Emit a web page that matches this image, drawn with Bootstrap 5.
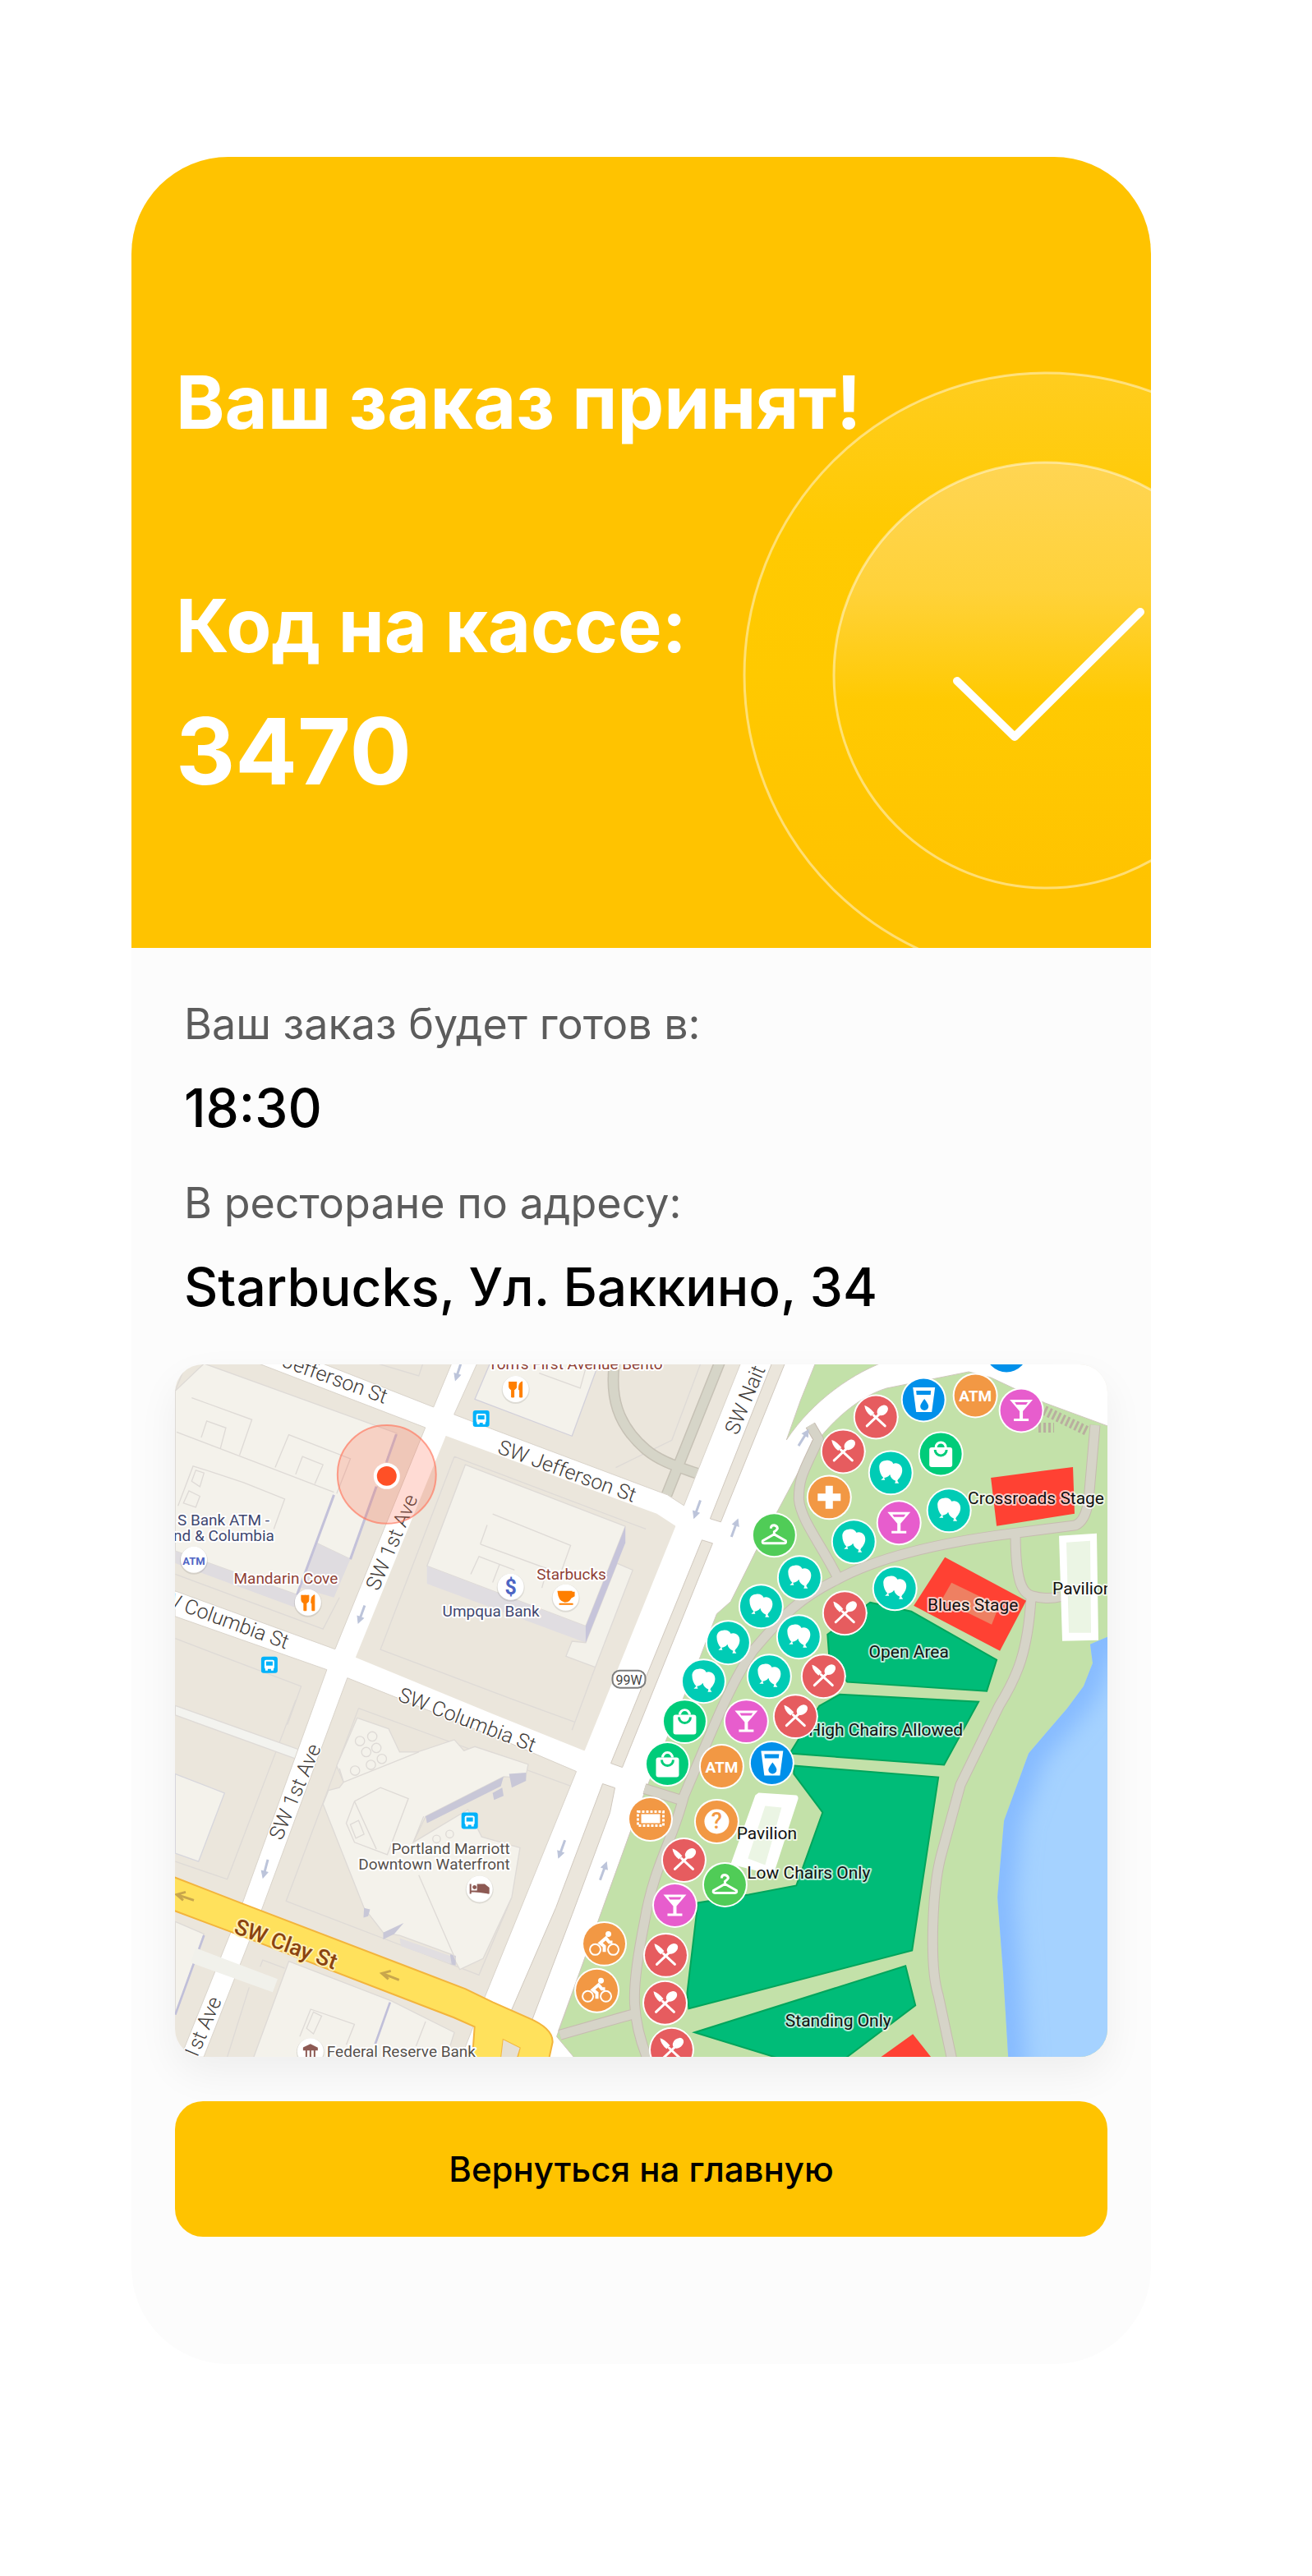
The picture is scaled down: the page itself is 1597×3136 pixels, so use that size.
<!DOCTYPE html>
<html lang="ru">
<head>
<meta charset="utf-8">
<meta name="viewport" content="width=device-width, initial-scale=1">
<title>Ваш заказ принят</title>
<link href="https://cdn.jsdelivr.net/npm/bootstrap@5.3.0/dist/css/bootstrap.min.css" rel="stylesheet">
<style>
  body { background: #fff; color: #000; font-family: Inter, "Open Sans", sans-serif; }
  .page-wrap { padding: 191px 196px 258px 160px; }
  .order-card { background: #fcfcfc; border-radius: 118px; }
  .order-hero { background: #ffc300; min-height: 963px; padding: 244px 54px 60px; }
  .hero-title { font-size: 90px; line-height: 110px; font-weight: 700; }
  .code-value { font-size: 112px; line-height: 130px; font-weight: 700; margin-top: 32px; }
  .code-block { margin-top: 162px; }
  .hero-art { position: absolute; right: 0; top: 0; width: 500px; height: 963px; }
  .order-body { padding: 63px 53px 155px; }
  .order-facts { padding-left: 11px; margin-bottom: 58px; }
  .order-facts dt { font-size: 52px; line-height: 60px; font-weight: 400; color: #5c5c5c; margin-bottom: 36px; }
  .order-facts dd { font-size: 64px; line-height: 72px; font-weight: 500; margin-bottom: 50px; }
  .order-facts dd:last-child { margin-bottom: 0; }
  .map-box { border-radius: 34px; box-shadow: 0 20px 50px rgba(0,0,0,.06); margin-bottom: 54px; }
  .map-box svg { display: block; width: 100%; height: auto; }
  .btn-home { --bs-btn-bg: #ffc300; --bs-btn-color: #000; --bs-btn-border-width: 0; --bs-btn-hover-bg: #f2b900; --bs-btn-border-radius: 34px;
    min-height: 165px; font-size: 42px; line-height: 50px; font-weight: 500; }
  .map-box text { font-family: Roboto, "Noto Sans", sans-serif; paint-order: stroke; stroke-linejoin: round; }
  .t-street { font-size: 25px; font-weight: 300; fill: #3f3b38; stroke: #fff; stroke-width: 3px; }
  .t-clay { font-size: 27px; font-weight: 500; fill: #8a4310; stroke: #fff0b5; stroke-width: 4px; }
  .t-poi { font-size: 19px; stroke: #fff; stroke-width: 4px; }
  .t-zone { font-size: 21px; fill: #111; stroke: #ffffffb0; stroke-width: 4px; }
  .t-atm { font-size: 19px; font-weight: 700; }
  .c-bank { fill: #3f4770; } .c-food { fill: #8f4136; } .c-place { fill: #55504c; }
</style>
</head>
<body>
<div class="page-wrap">
<main class="order-card overflow-hidden">
  <header class="order-hero position-relative text-white">
    <svg class="hero-art" viewBox="902 191 500 963" aria-hidden="true">
      <defs>
        <linearGradient id="gOuter" x1="0" y1="0" x2="0" y2="1"><stop offset="0" stop-color="#ffcd1f"/><stop offset=".25" stop-color="#ffca02"/><stop offset=".5" stop-color="#ffc900"/><stop offset=".85" stop-color="#ffc300"/></linearGradient>
        <linearGradient id="gInner" x1="0" y1="0" x2="0" y2="1"><stop offset="0" stop-color="#ffd553"/><stop offset=".3" stop-color="#ffd23a"/><stop offset=".56" stop-color="#ffca02"/><stop offset="1" stop-color="#ffc300"/></linearGradient>
      </defs>
      <g stroke="#fff" stroke-opacity=".45" stroke-width="3"><circle cx="1275" cy="822" r="368" fill="url(#gOuter)"/><circle cx="1275" cy="822" r="259" fill="url(#gInner)"/></g>
      <path d="M1166 829L1236 897L1389 745" fill="none" stroke="#fff" stroke-width="10" stroke-linecap="round" stroke-linejoin="round"/>
    </svg>
    <div class="position-relative">
      <h1 class="hero-title mb-0">Ваш заказ принят!</h1>
      <div class="code-block">
        <h2 class="hero-title mb-0">Код на кассе:</h2>
        <p class="code-value mb-0">3470</p>
      </div>
    </div>
  </header>

  <section class="order-body">
    <dl class="order-facts">
      <dt>Ваш заказ будет готов в:</dt>
      <dd>18:30</dd>
      <dt>В ресторане по адресу:</dt>
      <dd>Starbucks, Ул. Баккино, 34</dd>
    </dl>

    <div class="map-box overflow-hidden">
    <svg viewBox="213 1661 1136 844" role="img" aria-label="Карта: ресторан Starbucks">
      <defs>
        <filter id="soft" x="-40%" y="-20%" width="180%" height="140%"><feGaussianBlur stdDeviation="14"/></filter>
        <clipPath id="waterClip"><path id="shore" d="M1600 1900L1349 1993L1328 2002L1331 2025L1320 2053L1300 2080L1253 2135L1223 2217L1215 2310L1222 2403L1235 2620H1600Z"/></clipPath>
        <g id="fork" fill="#fff" stroke="#fff" stroke-linecap="round"><circle r="27"/><circle r="25.500" fill="#e65c5f" stroke="none"/><path d="M-11 11L7 -6M11 11L-3 -2" stroke-width="3" fill="none"/><ellipse cx="8" cy="-8" rx="7.500" ry="5.500" transform="rotate(-40 8 -8)" stroke="none"/><path d="M-14 -14Q-9 -13 -2 -5L-6 -1Q-13 -6 -14 -14Z" stroke="none"/></g>
        <g id="balloon" fill="#fff"><circle r="27.500"/><circle r="25.500" fill="#00ccb5"/><path d="M-6 -15C-2 -16 2 -14 3 -11C9 -13 14 -9 14 -3C14 2 11 6 9 8L8 10L10 13H5L6 10C2 8 0 6 -1 2C-3 5 -6 6 -8 6L-7 9H-12L-9 6C-12 3 -14 -2 -14 -7C-14 -12 -10 -15 -6 -15Z"/></g>
        <g id="cup"><circle r="27.500" fill="#fff"/><circle r="25.500" fill="#0090ea"/><path d="M-13 -15H14L10 15H-9Z" fill="#fff"/><path d="M-9 -11H9L8.500 -6H-8.500Z" fill="#0090ea"/><path d="M1 -1C4 3 6 6 6 8A5 5 0 0 1 -4 8C-4 6 -2 3 1 -1Z" fill="#0090ea"/></g>
        <g id="glass"><circle r="27.500" fill="#fff"/><circle r="25.500" fill="#e75dcd"/><path d="M-14 -13H14L2 1V10H9V13H-9V10H-2V1Z" fill="#fff"/><path d="M-8 -10H8L6 -7H-6Z" fill="#e75dcd"/></g>
        <g id="bag"><circle r="27.500" fill="#fff"/><circle r="25.500" fill="#00cc7a"/><rect x="-14" y="-8" width="28" height="24" rx="3" fill="#fff"/><path d="M-6 -8A6 6 0 0 1 6 -8" fill="none" stroke="#fff" stroke-width="3"/><path d="M-7 -5A7 7 0 0 0 7 -5" fill="none" stroke="#00cc7a" stroke-width="3"/></g>
        <g id="orange"><circle r="27.500" fill="#fff"/><circle r="25.500" fill="#f29844"/></g>
        <g id="hanger"><circle r="27.500" fill="#fff"/><circle r="25.500" fill="#50cc57"/><path d="M-4 -8Q-4 -12 0 -12Q4 -11 4 -8Q3 -6 0 -4V-1L14 7Q15 10 12 10H-12Q-15 10 -14 7L0 -1" fill="none" stroke="#fff" stroke-width="3"/></g>
        <g id="bike"><use href="#orange"/><g fill="none" stroke="#fff" stroke-width="2"><circle cx="-11" cy="7" r="6.500"/><circle cx="11" cy="7" r="6.500"/></g><circle cx="5" cy="-12" r="3.500" fill="#fff"/><path d="M0 10V3L-5 -1L2 -7L6 -2H10" fill="none" stroke="#fff" stroke-width="4"/></g>
        <g id="bus"><rect x="-10" y="-10" width="20" height="20" rx="3" fill="#00b2fa"/><rect x="-6" y="-6" width="12" height="11" rx="2" fill="#fff"/><path d="M-4 -4H4V1H-4Z" fill="#00b2fa"/><path d="M-5 4V7H-2V4M2 4V7H5V4" fill="#fff"/></g>
        <g id="poi"><circle cy="1" r="17" fill="#00000018"/><circle r="16" fill="#fff"/></g>
        <g id="food"><use href="#poi"/><path d="M-8 -9V-3Q-8 0 -5 1V10H-2V1Q1 0 1 -3V-9M-3.500 -9V-2M8 -9Q4 -8 4 -2V1H5V10H8Z" fill="#ff7f00" stroke="#ff7f00" stroke-width="1"/></g>
        <g id="arr" stroke="#bcc4da" stroke-width="3" fill="#bcc4da"><path d="M0 -12V4"/><path d="M-4 3H4L0 11Z" stroke-width="1"/></g>
      </defs>

      <rect x="213" y="1661" width="1136" height="844" fill="#ebe6dc"/>

      <!-- Block outlines and buildings -->
      <g transform="translate(200 1640) scale(.333333)" stroke="#dedad6" stroke-width="4" fill="none">
        <path d="M40 160L80 60M1060 400L790 1105L1280 1290M1060 400L1760 665L1495 1330M640 915L580 1030L40 830M40 1065L500 1240L450 1380"/>
        <path d="M145 60L850 315L680 775L555 715L485 905L40 745V160Z" fill="#f4f2eb"/>
        <path d="M40 745L485 905L475 950L40 790ZM555 715L680 775L620 915L500 880Z" fill="#dfdce0" stroke="none"/>
        <path d="M100 185L320 265L275 395M45 310L620 530M405 440L455 320L680 408L630 535M135 330L155 270L225 295L205 370M480 465L505 400L580 430L550 500M50 580L105 435L170 455L290 495L440 555L400 665M100 490L115 450L145 460L130 510ZM70 570L90 525L130 545L115 585Z"/>
        <path d="M620 540L485 905M848 318L812 420M775 510L680 775" stroke="#c3c1d9" stroke-width="9"/>
        <path d="M1190 60L1135 190L1490 325L1580 80V60Z" fill="#f4f2eb" stroke="#d2d0da"/>
        <path d="M1370 95L1520 150L1545 60M1960 60L1855 340L1650 440M780 60L930 105L945 60"/>
      </g>
      <g transform="translate(200 2070) scale(.333333)" stroke="#dedad6" stroke-width="4" fill="none">
        <path d="M480 0L230 655L40 590M710 30L445 735L1150 1005L1270 720M710 30L1500 320M350 975L360 950L440 980M310 1050L230 1305"/>
        <path d="M40 20L490 180L480 215L40 55Z" fill="#f3f3ef"/>
        <path d="M40 270L220 340L125 590L40 560Z" fill="#f4f2eb" stroke="#d7d6dc"/>
        <path d="M705 65L820 105L860 190L925 190L1060 145L1095 185L1135 170L1330 235L1320 285L1240 280L955 425L910 520L1110 400L1160 500L1300 540L1270 720L1165 945L1080 985L1050 930L860 860L800 850L730 760L580 380L600 330L640 320L655 300L630 240Z" fill="#f4f2eb"/>
        <path d="M955 425L1240 280L1230 315L960 450ZM800 850L875 815L840 855L800 875ZM730 760L752 765L745 790L728 795ZM1045 930L1065 935V970L1045 965ZM1260 270L1322 265V295L1270 320ZM1200 340L1235 320L1240 350L1205 365Z" fill="#c8c7d7" stroke="none"/>
        <path d="M860 870L1045 935L1050 965L865 900Z" fill="#e1dee1" stroke="none"/>
        <path d="M655 300L930 190M695 370L790 320L892 360L815 565L695 520L665 450ZM695 370L775 545M680 455L710 440L730 490L700 505ZM930 640L1065 950M948 425L910 520M640 250L655 300"/>
        <g><circle cx="715" cy="150" r="17"/><circle cx="760" cy="133" r="17"/><circle cx="738" cy="190" r="17"/><circle cx="775" cy="175" r="17"/><circle cx="697" cy="258" r="17"/><circle cx="755" cy="237" r="17"/><circle cx="795" cy="215" r="17"/><circle cx="995" cy="508" r="14"/><circle cx="1043" cy="490" r="14"/></g>
        <path d="M455 955L830 1100L1060 1215L1030 1310H325Z" fill="#f4f2eb"/>
        <path d="M40 810L145 855L40 1150Z" fill="#f4f2eb"/>
        <path d="M145 860L40 1150M825 1105L770 1260" stroke="#c0bfd9" stroke-width="8"/>
        <path d="M495 1230L535 1130L695 1185L665 1260M520 1200L545 1140L575 1155L545 1220ZM955 1175L920 1265"/>
      </g>

      <!-- Footpaths west of the parkway -->
      <g fill="none" stroke-linejoin="round"><path d="M749 1655C742 1700 752 1735 787 1765C805 1780 827 1786 852 1795M878 1655L812 1820" stroke="#c6c1b5" stroke-width="14"/><path d="M749 1655C742 1700 752 1735 787 1765C805 1780 827 1786 852 1795M878 1655L812 1820" stroke="#d6d5c8" stroke-width="11"/></g>

      <!-- White streets -->
      <path fill="#fff" stroke="#d9d3ca" stroke-width="1" d="M315 1660H393L528 1713L550 1660H581L553 1722L600 1740L813 1820L833 1833L902 1660H1400V1800L947 1840L920 1890L785 2183L733 2327L680 2473L703 2510H560L590 2433L702 2157L620 2122L423 2043L318 2327L248 2505H220L295 2318L398 2033L213 1968V1937L408 2008L518 1738Z"/>
      <g fill="#ebe6dc" stroke="#d0c8be" stroke-width="1">
        <path d="M942 1655H958L878 1853L865 1849ZM855 1875L868 1879L758 2152L744 2147ZM734 2172L749 2177L743 2207L697 2331L648 2460L622 2450L677 2323Z"/>
      </g>
      <path d="M238 2372L338 2410L332 2426L232 2390Z" fill="#f1f1eb"/>
      <clipPath id="blockClip"><path d="M543 1748L600 1769L800 1843L823 1858L712 2132L600 2087L433 2018Z"/></clipPath>
      <g clip-path="url(#blockClip)"><path d="M430 1740H830V2140H430Z" fill="#ebe6dc"/>
        <g transform="translate(200 1640) scale(.333333)" stroke="#dedad6" stroke-width="4" fill="none">
          <path d="M1060 400L790 1105L1280 1290L1500 1370M1060 400L1760 665M1575 1170L1490 1400"/>
          <path d="M1100 430L1685 655L1540 1020L960 800Z" fill="#f4f2eb"/>
          <path d="M960 800L1540 1020V1080L960 865Z" fill="#e0dde1" stroke="none"/>
          <path d="M1655 790L1712 815L1575 1170L1468 1130L1490 1075L1540 1080Z" fill="#f3f1ea"/>
          <path d="M1685 655V715L1540 1080V1020Z" fill="#c6c4da" stroke="none"/>
          <path d="M1200 610L1485 725L1440 850M1155 720L1180 650M1155 720L1400 810L1380 880M1120 830L1150 765L1280 815M1200 860L1225 795"/>
        </g>
      </g>

      <!-- Clay street -->
      <path d="M205 2283L295 2318L567 2422L600 2438L643 2457Q674 2470 673 2487L668 2510H629L633 2494L613 2484L610 2510H575L578 2468L553 2457L280 2352L205 2324Z" fill="#ffe15c" stroke="#f3b43c" stroke-width="2"/>
      <path d="M613 2484L633 2494L628 2510H610Z" fill="#e6e0d4"/>

      <!-- Park -->
      <path d="M995 1655H1085C1040 1670 990 1705 958 1753L975 1705Z" fill="#c3e1a9" stroke="#d0c8be"/>
      <path d="M980 1778C1000 1742 1040 1702 1080 1690L1180 1670L1207 1677L1273 1708L1360 1740V2510H703L678 2480L733 2327L785 2183L853 2017L873 1965L890 1950L920 1890L947 1840Z" fill="#c3e1a9" stroke="#cfc8bd"/>
      <use href="#shore" fill="#a5d2ff"/>
      <g clip-path="url(#waterClip)"><use href="#shore" fill="none" stroke="#84b9ff" stroke-width="40" filter="url(#soft)"/></g>
      <g fill="none" stroke-linejoin="round">
        <path d="M987 1735L997 1752C980 1790 973 1797 973 1825C975 1850 1000 1880 1020 1920M1334 1735L1326 1827Q1322 1852 1310 1857L1233 1867Q1090 1885 1020 1923C975 1945 955 1965 917 2010C890 2050 870 2100 833 2187C820 2240 797 2270 785 2340C775 2390 772 2420 773 2440Q775 2475 790 2510M785 2178L830 2192M682 2478L770 2453M1237 1868C1237 1925 1245 1940 1257 1943Q1275 1948 1292 1944M1256 1945C1252 2010 1240 2040 1217 2077L1170 2173L1147 2257C1135 2300 1132 2395 1143 2430L1160 2510" stroke="#c6bbb0" stroke-width="13"/>
        <path d="M987 1735L997 1752C980 1790 973 1797 973 1825C975 1850 1000 1880 1020 1920M1334 1735L1326 1827Q1322 1852 1310 1857L1233 1867Q1090 1885 1020 1923C975 1945 955 1965 917 2010C890 2050 870 2100 833 2187C820 2240 797 2270 785 2340C775 2390 772 2420 773 2440Q775 2475 790 2510M785 2178L830 2192M682 2478L770 2453M1237 1868C1237 1925 1245 1940 1257 1943Q1275 1948 1292 1944M1256 1945C1252 2010 1240 2040 1217 2077L1170 2173L1147 2257C1135 2300 1132 2395 1143 2430L1160 2510" stroke="#d6d4c8" stroke-width="11"/>
        <path d="M1272 1717L1326 1743M1265 1738L1284 1738" stroke="#b9ae9f" stroke-width="12" stroke-dasharray="3 3"/>
      </g>
      <g fill="#00bc78" stroke="#00a55c" stroke-width="2">
        <path d="M1008 1990L1060 1951L1110 1962L1214 2021L1202 2059L1032 2048L1010 2017Z"/>
        <path d="M1023 2063L1192 2072L1150 2149L962 2135L998 2077Z"/>
        <path d="M967 2150L1143 2164L1111 2375L839 2446L837 2427L850 2317L912 2307L970 2296L1002 2207L967 2160Z"/>
        <path d="M846 2475L1103 2394L1115 2442L1025 2510H960Z"/>
      </g>
      <g fill="#ff4133"><path d="M1207 1799L1307 1786L1309 1843L1214 1858ZM1151 1896L1250 1949L1218 2010L1113 1955ZM1112 2477L1138 2510H1066Z"/><path d="M1159 1927L1217 1955L1208 1978L1147 1948Z" fill="#ee8062"/></g>
      <g fill="#fff"><path d="M1290 1870L1336 1867L1338 1997L1294 1998ZM924 2183L970 2186Q973 2187 972 2191L942 2283L890 2270L920 2186Z"/><path d="M1299 1878L1328 1876L1329 1988L1302 1988ZM932 2199L952 2201L932 2271L911 2263Z" fill="#ebf5e4"/></g>

      <!-- Direction arrows -->
      <g><use href="#arr" transform="translate(558 1670) rotate(18)"/><use href="#arr" transform="translate(440 1966) rotate(20)"/><use href="#arr" transform="translate(849 1838) rotate(20)"/><use href="#arr" transform="translate(895 1860) rotate(200)"/><use href="#arr" transform="translate(979 1750) rotate(212)"/><use href="#arr" transform="translate(323 2276) rotate(15)"/><use href="#arr" transform="translate(684 2252) rotate(20)"/><use href="#arr" transform="translate(735 2278) rotate(200)"/></g>
      <path d="M236 2314L218 2308M486 2411L468 2404M226 2304L215 2307L223 2314M476 2400L465 2403L473 2410" fill="none" stroke="#c8a64c" stroke-width="3"/>

      <!-- Street names -->
      <g class="t-street">
        <text text-anchor="end" transform="translate(468 1709) rotate(20)">Jefferson St</text>
        <text text-anchor="middle" transform="translate(688 1799) rotate(20)">SW Jefferson St</text>
        <text text-anchor="end" transform="translate(348 2008) rotate(20)">W Columbia St</text>
        <text text-anchor="middle" transform="translate(566 2102) rotate(21)">SW Columbia St</text>
        <text text-anchor="middle" transform="translate(485 1881) rotate(-67)">SW 1st Ave</text>
        <text text-anchor="middle" transform="translate(367 2185) rotate(-67)">SW 1st Ave</text>
        <text text-anchor="end" transform="translate(270 2436) rotate(-67)">1st Ave</text>
        <text transform="translate(898 1748) rotate(-67)">SW Nait</text>
      </g>
      <text class="t-clay" text-anchor="middle" transform="translate(345 2376) rotate(20)">SW Clay St</text>
      <rect x="746" y="2034" width="40" height="21" rx="9" fill="#fff" stroke="#7d7d7d" stroke-width="2"/>
      <text x="766" y="2051" text-anchor="middle" font-size="16" fill="#444">99W</text>

      <!-- Points of interest -->
      <g class="t-poi">
        <g class="c-bank"><text x="328" y="1857" text-anchor="end">S Bank ATM -</text><text x="334" y="1876" text-anchor="end">nd &amp; Columbia</text><text x="598" y="1968" text-anchor="middle">Umpqua Bank</text></g>
        <g class="c-food"><text x="348" y="1928" text-anchor="middle">Mandarin Cove</text><text x="807" y="1667" text-anchor="end">Tom's First Avenue Bento</text><text x="696" y="1923" text-anchor="middle">Starbucks</text></g>
        <g class="c-place"><text x="621" y="2258" text-anchor="end">Portland Marriott</text><text x="621" y="2277" text-anchor="end">Downtown Waterfront</text><text x="398" y="2505">Federal Reserve Bank</text></g>
      </g>
      <use href="#poi" x="236" y="1899"/><text x="236" y="1905" text-anchor="middle" font-size="13" font-weight="700" fill="#5066c4">ATM</text>
      <use href="#food" x="375" y="1951"/><use href="#food" x="628" y="1691"/>
      <use href="#poi" x="622" y="1932"/><text x="622" y="1941" text-anchor="middle" font-size="25" font-weight="700" fill="#4d66c4">$</text>
      <use href="#poi" x="689" y="1945"/><path d="M680 1938H696V1943Q694 1950 688 1950Q681 1949 680 1938ZM695 1939H699V1943L694 1946M681 1953H698" fill="#ff7f00" stroke="#ff7f00" stroke-width="2"/>
      <use href="#poi" x="584" y="2300"/><path d="M573 2294V2306M574 2303H595V2306M582 2299V2295H590L595 2299V2302H582Z" fill="#8d5a54" stroke="#8d5a54" stroke-width="2"/><circle cx="578" cy="2298" r="2.500" fill="#8d5a54"/>
      <use href="#poi" x="378" y="2498"/><path d="M370 2494L378 2490L386 2494V2496H370ZM373 2497V2507M378 2497V2507M383 2497V2507" fill="#8d5a54" stroke="#8d5a54" stroke-width="2"/>
      <use href="#bus" x="586" y="1727"/><use href="#bus" x="328" y="2027"/><use href="#bus" x="572" y="2217"/>

      <!-- Festival zones -->
      <g class="t-zone">
        <text x="1262" y="1831" text-anchor="middle">Crossroads Stage</text><text x="1185" y="1961" text-anchor="middle">Blues Stage</text><text x="1107" y="2018" text-anchor="middle">Open Area</text><text x="1282" y="1941">Pavilion</text><text x="1173" y="2113" text-anchor="end">High Chairs Allowed</text><text x="934" y="2240" text-anchor="middle">Pavilion</text><text x="985" y="2288" text-anchor="middle">Low Chairs Only</text><text x="1021" y="2468" text-anchor="middle">Standing Only</text>
      </g>

      <!-- Festival pins -->
      <g>
        <use href="#cup" x="1226" y="1645"/><use href="#cup" x="1125" y="1704"/><use href="#orange" x="1188" y="1699"/><use href="#glass" x="1244" y="1717"/>
        <use href="#fork" x="1067" y="1725"/><use href="#fork" x="1027" y="1767"/><use href="#bag" x="1146" y="1770"/><use href="#balloon" x="1085" y="1793"/>
        <use href="#orange" x="1010" y="1823"/><path d="M996 1823H1024M1010 1809V1837" stroke="#fff" stroke-width="9"/>
        <use href="#balloon" x="1156" y="1839"/><use href="#glass" x="1095" y="1854"/><use href="#balloon" x="1040" y="1877"/><use href="#hanger" x="943" y="1869"/>
        <use href="#balloon" x="974" y="1921"/><use href="#balloon" x="1090" y="1934"/><use href="#balloon" x="927" y="1956"/><use href="#fork" x="1029" y="1964"/>
        <use href="#balloon" x="887" y="2000"/><use href="#balloon" x="973" y="1993"/><use href="#balloon" x="857" y="2047"/><use href="#balloon" x="937" y="2041"/><use href="#fork" x="1003" y="2041"/>
        <use href="#fork" x="969" y="2090"/><use href="#glass" x="909" y="2096"/><use href="#bag" x="834" y="2096"/><use href="#bag" x="813" y="2148"/>
        <use href="#orange" x="879" y="2151"/><use href="#cup" x="940" y="2147"/>
        <use href="#orange" x="792" y="2215"/><rect x="777" y="2206" width="31" height="17" fill="none" stroke="#fff" stroke-width="3" stroke-dasharray="3 2"/><rect x="781" y="2209" width="23" height="11" fill="#fff"/>
        <use href="#orange" x="873" y="2218"/><circle cx="873" cy="2218" r="15" fill="#fff"/><text x="873" y="2227" text-anchor="middle" font-size="27" font-weight="500" fill="#f29844">?</text>
        <use href="#fork" x="833" y="2265"/><use href="#hanger" x="883" y="2295"/><use href="#glass" x="822" y="2320"/>
        <use href="#bike" x="736" y="2367"/><use href="#bike" x="727" y="2424"/>
        <use href="#fork" x="811" y="2381"/><use href="#fork" x="810" y="2439"/><use href="#fork" x="818" y="2496"/>
        <g class="t-atm" fill="#fff" text-anchor="middle"><text x="1188" y="1706">ATM</text><text x="879" y="2158">ATM</text></g>
      </g>

      <!-- Restaurant marker -->
      <circle cx="471" cy="1795" r="60" fill="#ff5a3c" fill-opacity=".22" stroke="#ff7a62" stroke-opacity=".7" stroke-width="2"/>
      <circle cx="471" cy="1797" r="16" fill="#fff"/><circle cx="471" cy="1797" r="12" fill="#ff5026"/>
    </svg>
    </div>

    <button type="button" class="btn btn-home w-100">Вернуться на главную</button>
  </section>
</main>
</div>
<script src="https://cdn.jsdelivr.net/npm/bootstrap@5.3.0/dist/js/bootstrap.bundle.min.js"></script>
</body>
</html>
